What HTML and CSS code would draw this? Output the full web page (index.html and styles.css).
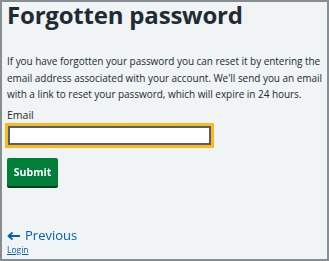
FILE: index.html
```html
<!DOCTYPE html>
<html lang="en">
<head>
    <meta charset="UTF-8">
    <meta name="viewport" content="width=device-width, initial-scale=1.0">
    <title>Forgotten password</title>
    <link rel="stylesheet" href="styles.css">
</head>
<body>
    <div class="frame">
        <main class="content">
            <h1 class="title">Forgotten password</h1>
            <p class="intro">If you have forgotten your password you can reset it by entering the email address associated with your account. We'll send you an email with a link to reset your password, which will expire in 24 hours.</p>

            <form class="form" onsubmit="return false;">
                <label class="label" for="email">Email</label>
                <input class="input" type="email" id="email" autofocus>
                <button class="button" type="submit">Submit</button>
            </form>
        </main>

        <nav class="pager">
            <a class="pager-link" href="#">
                <svg class="arrow" width="13" height="8" viewBox="0 0 13 8" aria-hidden="true">
                    <path d="M12.5 4H2M5 1L1.5 4L5 7" fill="none" stroke="currentColor" stroke-width="1.8" stroke-linecap="round" stroke-linejoin="round"/>
                </svg>
                Previous
            </a>
            <a class="pager-sub" href="#">Login</a>
        </nav>
    </div>
</body>
</html>
```

FILE: styles.css
```css
html, body {
    margin: 0;
    padding: 0;
}
body {
    font-family: 'Open Sans', 'Noto Sans', sans-serif;
    color: #212b32;
    background: #f0f4f5;
}
.frame {
    box-sizing: border-box;
    width: 329px;
    height: 261px;
    border: 2px solid #868e93;
    background: #f0f4f5;
    padding: 0 0 0 5px;
    display: flex;
    flex-direction: column;
}
.content {
    flex: 1;
}
.title {
    font-size: 24px;
    font-weight: 700;
    line-height: 26px;
    margin: 0;
    letter-spacing: -0.2px;
}
.intro {
    font-size: 10px;
    line-height: 16.5px;
    margin: 25px 0 0;
    letter-spacing: -0.04px;
}
.form {
    display: flex;
    flex-direction: column;
    align-items: flex-start;
    margin-top: 5px;
}
.label {
    font-size: 10.5px;
    line-height: 14px;
}
.input {
    box-sizing: border-box;
    width: 203px;
    height: 19px;
    margin: 4px 0 0 1px;
    border: 2px solid #4c6272;
    outline: 3px solid #ffb81c;
    background: #fff;
    padding: 0 3px;
    font: inherit;
    font-size: 11px;
}
.button {
    margin-top: 13px;
    width: 51px;
    height: 28px;
    border: none;
    border-radius: 2px;
    background: #007f3b;
    box-shadow: 0 2px 0 #00401e;
    color: #fff;
    font-family: inherit;
    font-size: 10.5px;
    font-weight: 700;
    padding: 0;
    cursor: pointer;
}
.pager {
    display: flex;
    flex-direction: column;
    align-items: flex-start;
    padding-bottom: 3px;
}
.pager-link {
    display: flex;
    align-items: center;
    gap: 5px;
    color: #005eb8;
    font-size: 13px;
    line-height: 18px;
    text-decoration: none;
}
.arrow {
    margin-top: 1px;
}
.pager-sub {
    color: #005eb8;
    font-size: 8.5px;
    line-height: 12px;
}
```
